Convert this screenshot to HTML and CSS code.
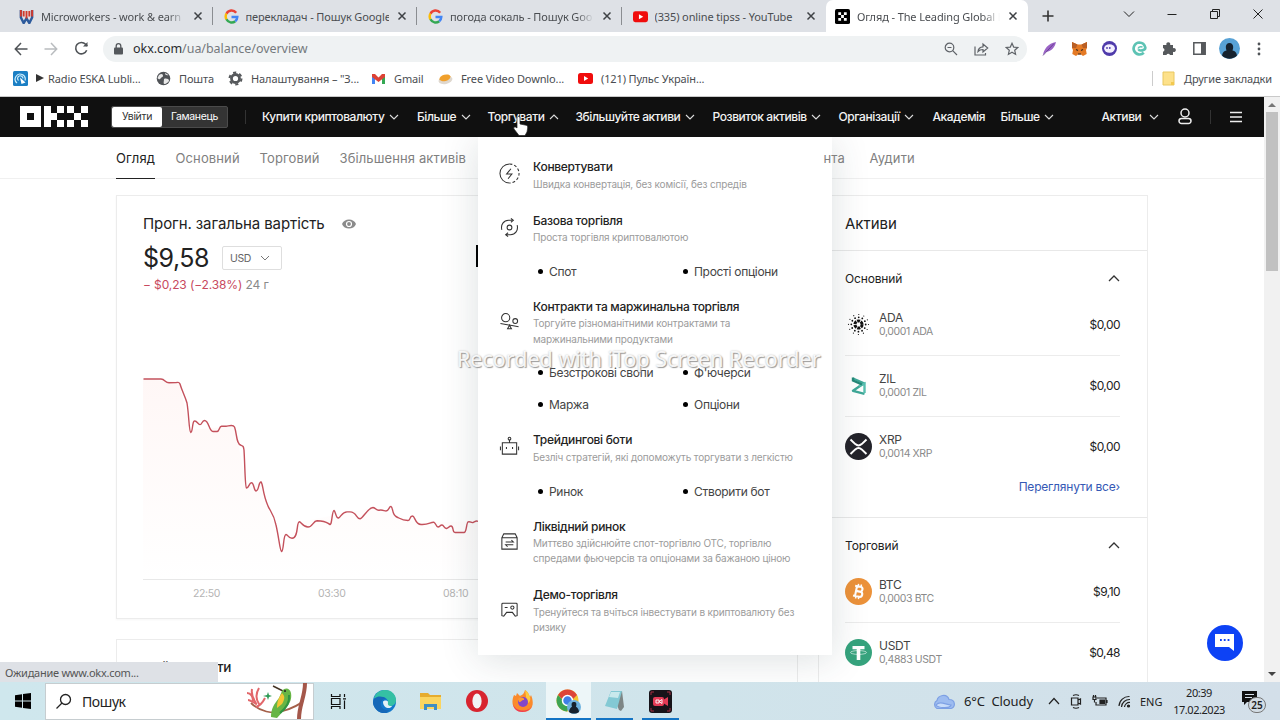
FILE: index.html
```
<!DOCTYPE html>
<html lang="uk">
<head>
  <meta charset="UTF-8">
  <title>Огляд - The Leading Global</title>
  <link rel="stylesheet" href="styles.css">
</head>
<body>

  <div class="tab-strip">
    <div class="tab">
      <svg class="favicon" viewBox="0 0 16 16"><path d="M2 1v8l3 6 3-5 3 5 3-6V1" fill="none" stroke="#2c5a9c" stroke-width="2.6"/><path d="M2 1v7M8 2v8M14 1v7M5 2v6M11 2v6" stroke="#d33a2c" stroke-width="2" fill="none"/></svg>
      <span class="tab-title">Microworkers - work &amp; earn</span>
      <svg class="tab-close" viewBox="0 0 10 10"><path d="M1.500 1.500l7 7M8.500 1.500l-7 7"/></svg>
    </div>
    <div class="tab">
      <svg class="favicon" viewBox="0 0 16 16" fill="none" stroke-width="2.6"><path d="M13 4A6.200 6.200 0 0 0 2.600 5" stroke="#ea4335"/><path d="M2.600 5a6.200 6.200 0 0 0 0 6" stroke="#fbbc05"/><path d="M2.600 11a6.200 6.200 0 0 0 9.400 2" stroke="#34a853"/><path d="M12 13a6 6 0 0 0 2.200-4.500H8" stroke="#4285f4"/></svg>
      <span class="tab-title no-fade">перекладач - Пошук Google</span>
      <svg class="tab-close" viewBox="0 0 10 10"><path d="M1.500 1.500l7 7M8.500 1.500l-7 7"/></svg>
    </div>
    <div class="tab">
      <svg class="favicon" viewBox="0 0 16 16" fill="none" stroke-width="2.6"><path d="M13 4A6.200 6.200 0 0 0 2.600 5" stroke="#ea4335"/><path d="M2.600 5a6.200 6.200 0 0 0 0 6" stroke="#fbbc05"/><path d="M2.600 11a6.200 6.200 0 0 0 9.400 2" stroke="#34a853"/><path d="M12 13a6 6 0 0 0 2.200-4.500H8" stroke="#4285f4"/></svg>
      <span class="tab-title">погода сокаль - Пошук Goo</span>
      <svg class="tab-close" viewBox="0 0 10 10"><path d="M1.500 1.500l7 7M8.500 1.500l-7 7"/></svg>
    </div>
    <div class="tab tab-last">
      <svg class="favicon" viewBox="0 0 16 16"><rect y="2.500" width="16" height="11.500" rx="2.500" fill="#f00c0c"/><path d="M6.300 5.500v5.500l4.600-2.700z" fill="#fff"/></svg>
      <span class="tab-title no-fade">(335) online tipss - YouTube</span>
      <svg class="tab-close" viewBox="0 0 10 10"><path d="M1.500 1.500l7 7M8.500 1.500l-7 7"/></svg>
    </div>
    <div class="tab tab-active">
      <svg class="favicon" viewBox="0 0 16 16"><rect width="16" height="16" rx="2" fill="#000"/><path d="M3.500 3.500h3v3h-3zM9.500 3.500h3v3h-3zM6.500 6.500h3v3h-3zM3.500 9.500h3v3h-3zM9.500 9.500h3v3h-3z" fill="#fff"/></svg>
      <span class="tab-title">Огляд - The Leading Global E</span>
      <svg class="tab-close" viewBox="0 0 10 10"><path d="M1.500 1.500l7 7M8.500 1.500l-7 7"/></svg>
    </div>
    <svg class="new-tab" viewBox="0 0 12 12"><path d="M6 .5v11M.5 6h11"/></svg>
    <div class="window-buttons">
      <svg viewBox="0 0 12 12"><path d="M1 3.500l5 5 5-5"/></svg>
      <svg viewBox="0 0 12 12"><path d="M1.500 6.500h9"/></svg>
      <svg viewBox="0 0 12 12"><path d="M1.500 3.500h7v7h-7zM3.500 3.500v-2h7v7h-2"/></svg>
      <svg viewBox="0 0 12 12"><path d="M1.500 1.500l9 9M10.500 1.500l-9 9"/></svg>
    </div>
  </div>

  <div class="toolbar">
    <div class="toolbar-cell"><svg width="14" height="14" viewBox="0 0 14 14" fill="none" stroke="#4f5357" stroke-width="1.500"><path d="M13.500 7H1.500M7 1L1.300 7 7 13"/></svg></div>
    <div class="toolbar-cell"><svg width="14" height="14" viewBox="0 0 14 14" fill="none" stroke="#b9bcbf" stroke-width="1.500"><path d="M.5 7h12M7 1l5.700 6L7 13"/></svg></div>
    <div class="toolbar-cell"><svg width="15" height="15" viewBox="0 0 15 15" fill="none" stroke="#4f5357" stroke-width="1.600"><path d="M12.700 9.300a5.700 5.700 0 1 1-1.100-6l1.700 1.700"/><path d="M13.500 1v4.600H9z" fill="#4f5357" stroke="none"/></svg></div>
    <div class="omnibox">
      <svg width="9" height="12" viewBox="0 0 9 12"><rect y="4.500" width="9" height="7" rx="1" fill="#54585c"/><path d="M2.200 5V3a2.300 2.300 0 0 1 4.600 0v2" fill="none" stroke="#54585c" stroke-width="1.300"/></svg>
      <span class="url">okx.com<span class="url-path">/ua/balance/overview</span></span>
      <div class="omnibox-icons">
        <svg width="14" height="14" viewBox="0 0 14 14"><circle cx="5.500" cy="5.500" r="4.300"/><path d="M8.700 8.700l4.300 4.300M3.500 5.500h4"/></svg>
        <svg width="15" height="14" viewBox="0 0 15 14"><path d="M1 4.500v8.500h10.500v-2M4 9.500c.3-3 2-4.500 5-4.700V2l4.700 4-4.700 4V7.500C7 7.500 5.300 8 4 9.500z"/></svg>
        <svg width="14" height="14" viewBox="0 0 14 14"><path d="M7 1.300l1.700 3.800 4.100.4-3.100 2.800.9 4.100L7 10.300l-3.600 2.100.9-4.100-3.100-2.800 4.100-.4z"/></svg>
      </div>
    </div>
    <div class="toolbar-cell"><svg width="15" height="15" viewBox="0 0 15 15"><path d="M1 14C2 8 6 2.500 14 1c-1 5-4 9-10 10z" fill="#9a63c6"/><path d="M1 14.500L12 2.500" stroke="#5c3a86" stroke-width=".8"/></svg></div>
    <div class="toolbar-cell"><svg width="15" height="14" viewBox="0 0 15 14"><path d="M0 0l5.500 2.500h4L15 0v6l-1 2 .7 4-3.700 2-2-1.500H6L4 14l-3.700-2L1 8 0 6z" fill="#e47a25"/><path d="M0 0l5.500 2.500L4 6 0 6zM15 0L9.500 2.500 11 6l4 0z" fill="#b95f25"/><path d="M4 7.500l2 1M11 7.500l-2 1M6 12h3" stroke="#3b2a20" stroke-width="1.200"/></svg></div>
    <div class="toolbar-cell"><svg width="15" height="15" viewBox="0 0 15 15"><circle cx="7.500" cy="7.500" r="7.500" fill="#4f3bab"/><ellipse cx="7.500" cy="7.500" rx="5.400" ry="4.200" fill="#f4f0ff"/><circle cx="5" cy="7" r=".9" fill="#4f3bab"/><circle cx="7.800" cy="7" r=".9" fill="#4f3bab"/></svg></div>
    <div class="toolbar-cell"><svg width="15" height="15" viewBox="0 0 15 15" fill="none" stroke="#5dc3b4"><path d="M6.500 8.200C7.500 10.500 13.500 9.500 13.300 6.500 12.500 3 10 1.500 7.300 1.500a6 6 0 1 0 4.500 10.300" stroke-width="2.700"/><path d="M6 7.500c1-2 3-2 4.500-1.500" stroke-width="1.500"/></svg></div>
    <div class="toolbar-cell"><svg width="14" height="14" viewBox="0 0 14 14"><path d="M1 3h3.500a2 2 0 1 1 3.600 0H11v3.200a2 2 0 1 1 0 3.600V13H8a2 2 0 0 0-3.600 0H1V9.700a1.900 1.900 0 0 0 0-3.700z" fill="#56595c"/></svg></div>
    <div class="toolbar-cell"><svg width="13" height="13" viewBox="0 0 13 13"><path d="M.8.800h11.400v11.400H.8z" fill="none" stroke="#56595c" stroke-width="1.500"/><path d="M8 1h4v11H8z" fill="#56595c"/></svg></div>
    <div class="toolbar-cell"><svg width="21" height="21" viewBox="0 0 21 21"><circle cx="10.500" cy="10.500" r="10.500" fill="#58a2d6"/><path d="M3 17.500c.5-3 2-4.500 4.500-5-1.500-4-.5-7.500 3-7.500s4.500 3.500 3 7.500c2.500.5 4 2 4.500 5a10.500 10.500 0 0 1-15 0z" fill="#15222f"/></svg></div>
    <div class="toolbar-cell"><svg width="4" height="14" viewBox="0 0 4 14" fill="#4f5357"><circle cx="2" cy="2" r="1.400"/><circle cx="2" cy="7" r="1.400"/><circle cx="2" cy="12" r="1.400"/></svg></div>
  </div>

  <div class="bookmarks">
    <div class="bookmark"><svg class="bm-icon" viewBox="0 0 15 15"><rect width="15" height="15" rx="1.500" fill="#1b7fc4"/><path d="M4 12A5 5 0 1 1 12 9.500M5.500 9.500a2.700 2.700 0 1 1 4.500-2" fill="none" stroke="#cdeefc" stroke-width="1.200"/><path d="M7 6.500l1.500 6.500 4-1.500z" fill="#fff"/></svg><span class="play"></span><span>Radio ESKA Lubli...</span></div>
    <div class="bookmark"><svg class="bm-icon" viewBox="0 0 15 15"><circle cx="7.500" cy="7.500" r="6.800" fill="#505357"/><path d="M3 4c3-2 4-.5 4 1s-2 1-2.500 2.500S2 8 1.500 7M9 2c0 2 1.500 2.500 3.500 2M8 8c2-1 5 0 5 1.500S10 13 8.500 13 8 10 8 8z" fill="#e8e8e8"/></svg><span>Пошта</span></div>
    <div class="bookmark"><svg class="bm-icon" viewBox="0 0 15 15"><circle cx="7.500" cy="7.500" r="4" fill="none" stroke="#56595c" stroke-width="2.800"/><circle cx="7.500" cy="7.500" r="6" fill="none" stroke="#56595c" stroke-width="2" stroke-dasharray="3.142 3.142"/></svg><span>Налаштування – "З...</span></div>
    <div class="bookmark"><svg class="bm-icon" viewBox="0 0 15 15"><path d="M1 3h3v10H1z" fill="#4285f4"/><path d="M11 3h3v10h-3z" fill="#34a853"/><path d="M1 3l3 0 3.500 3.500L11 3h3v3L7.500 11 1 6z" fill="#dd4235"/></svg><span>Gmail</span></div>
    <div class="bookmark"><svg class="bm-icon" viewBox="0 0 15 15"><ellipse cx="7.500" cy="9" rx="7" ry="4" fill="#dfd8cf" transform="rotate(-12 7.500 9)"/><ellipse cx="7" cy="6.800" rx="5.600" ry="3.200" fill="#f0a02c" transform="rotate(-15 7 7)"/></svg><span>Free Video Downlo...</span></div>
    <div class="bookmark"><svg class="bm-icon" viewBox="0 0 15 15"><rect y="2" width="15" height="11" rx="2.500" fill="#f00c0c"/><path d="M6 5v5l4.200-2.500z" fill="#fff"/></svg><span>(121) Пульс Україн...</span></div>
    <div class="bookmark other-bookmarks"><svg class="bm-icon" viewBox="0 0 15 15"><path d="M2 1h11v13H2z" fill="#fde18a" stroke="#e9c860"/><path d="M10 11h3v3h-3z" fill="#f3c94f"/></svg><span>Другие закладки</span></div>
  </div>

  <div class="viewport">
    <div class="page">
      <header class="okx-header">
        <svg class="okx-logo" width="68" height="21" viewBox="0 0 68 21" fill="#fff" shape-rendering="crispEdges"><path d="M0 0h21v21H0zM7 7v7h7V7z" fill-rule="evenodd"/><path d="M24 0h7v21h-7zM31 7h6v7h-6zM37 0h7v7h-7zM37 14h7v7h-7z"/><path d="M47 0h7v7h-7zM61 0h7v7h-7zM54 7h7v7h-7zM47 14h7v7h-7zM61 14h7v7h-7z"/></svg>
        <div class="switcher"><span class="switch-on">Увійти</span><span class="switch-off">Гаманець</span></div>
        <nav class="main-nav">
          <a>Купити криптовалюту <svg viewBox="0 0 10 6"><path d="M1 1l4 4 4-4"/></svg></a>
          <a>Більше <svg viewBox="0 0 10 6"><path d="M1 1l4 4 4-4"/></svg></a>
          <a>Торгувати <svg viewBox="0 0 10 6"><path d="M1 5l4-4 4 4"/></svg></a>
          <a>Збільшуйте активи <svg viewBox="0 0 10 6"><path d="M1 1l4 4 4-4"/></svg></a>
          <a>Розвиток активів <svg viewBox="0 0 10 6"><path d="M1 1l4 4 4-4"/></svg></a>
          <a>Організації <svg viewBox="0 0 10 6"><path d="M1 1l4 4 4-4"/></svg></a>
          <a>Академія</a>
          <a>Більше <svg viewBox="0 0 10 6"><path d="M1 1l4 4 4-4"/></svg></a>
          <a class="nav-assets">Активи <svg viewBox="0 0 10 6"><path d="M1 1l4 4 4-4"/></svg></a>
        </nav>
        <svg class="user-icon" width="14" height="17" viewBox="0 0 14 17"><circle cx="7" cy="5" r="4"/><path d="M3.500 10.500h7a2.500 2.500 0 0 1 0 5h-7a2.500 2.500 0 0 1 0-5z"/></svg>
        <span class="header-line"></span>
        <svg class="burger" width="12" height="12" viewBox="0 0 12 12"><path d="M0 1.500h12M0 6h12M0 10.500h12"/></svg>
      </header>

      <nav class="sub-nav">
        <a class="current">Огляд</a>
        <a>Основний</a>
        <a>Торговий</a>
        <a>Збільшення активів</a>
        <a>нта</a>
        <a>Аудити</a>
      </nav>

      <main class="content">
        <div class="left-column">
          <section class="card balance">
            <h2 class="balance-title">Прогн. загальна вартість <svg width="14" height="10" viewBox="0 0 14 10"><path d="M0 5C2-1 12-1 14 5 12 11 2 11 0 5z" fill="#8b8b8b"/><circle cx="7" cy="5" r="2.500" fill="none" stroke="#fff" stroke-width="1.200"/></svg></h2>
            <div class="balance-row">
              <span class="amount">$9,58</span>
              <span class="currency">USD <svg viewBox="0 0 10 6"><path d="M1 1l4 4 4-4"/></svg></span>
              <span class="range-button"></span>
            </div>
            <p class="change"><span class="loss">− $0,23 (−2.38%)</span> 24 г</p>
            <svg class="chart" width="627" height="210" viewBox="143 370 627 210">
              <defs>
                <linearGradient id="fade" x1="0" y1="0" x2="0" y2="1"><stop offset="0" stop-color="#fff7f6"/><stop offset="1" stop-color="#fff"/></linearGradient>
              </defs>
              <path fill="url(#fade)" d="M143 379L179 382 190 430 235 426 246 485 261 483 281 551 299 522 372 508 420 523 478 521V580H143z"/>
              <path class="chart-line" d="M143.500 379H161C165 379 165 382.800 169 382.800L176 382.600C179 382 179 382.500 180 384C182 391 185 396 187 403C189 415 189 432 190.800 432.500C193 432 192 420 195 421C197 421 198 424.600 200 424.600S202 420.500 204.500 420.500C209 420.500 209 431.500 213 431.500H217C219.500 431.500 219 426.500 221.500 426.300H226C229 426 233 424 234.500 427C237 433 236 444 241 445.300C243 446 243.500 446 244 450C245 466 245 487 246.500 488C249 488 249 482.700 251.500 482.700S254 491 256 491C259 491 258.500 481.500 261 482C263 483 262.500 494 268 506C270 511 274 514 276 525C279 538 280 551 281.500 551.500C284 551 283 535 286 534.500C288 534.500 288 538.300 292 538.300C299 538.300 296 521.500 299.500 521.800C301 522 303 527 308 527S313 520.700 317 520.700C327 521 327 523 330 524.500C332 525 332 510.500 334 510.500C335.500 511 336 518.500 338.500 518C341 517 342 512 347 511.900H350C357 512 356 518.800 360 518.800C363 518.500 368 507.500 373 507.500C376 508 376 510.500 379 510.200C383 509.500 384 511 386 511C389 511 389 506 391 506.500C393 507 392 514.500 396 516.500C401 519 402 520.500 408 520.500C411 520.300 409 516 412.500 516C415 516 415 524.500 421 524.500C429 525 430 522 434 522.300C436 523 436 527 438 527S440 524.800 442 525S444 528.800 446.500 528.500S449 526 451 526C454 526 452 532.500 455 532.500H464C467 532.500 466 521.800 468.500 521.800C471 521.500 471 523 473 522.500C475 522 476 520 478 521.500"/>
              <path d="M143 579.500h627" stroke="#e8e8e8"/>
            </svg>
            <div class="chart-times"><span>22:50</span><span>03:30</span><span>08:10</span></div>
          </section>
          <section class="card products"><h2>Мої продукти</h2></section>
        </div>

        <aside class="card assets">
          <h2 class="assets-title">Активи</h2>
          <div class="assets-group">
            <h3>Основний <svg viewBox="0 0 12 7"><path d="M1 6l5-5 5 5"/></svg></h3>
            <div class="coin">
              <svg class="coin-icon" viewBox="0 0 27 27" fill="none" stroke="#111"><circle cx="13.500" cy="13.500" r="3.600" stroke-width="3" stroke-dasharray="3 .77"/><g stroke-linecap="round"><circle cx="13.500" cy="13.500" r="7.200" stroke-width="1.800" stroke-dasharray="0 3.770"/><circle cx="13.500" cy="13.500" r="10" stroke-width="1.200" stroke-dasharray="0 5.236"/></g></svg>
              <div class="coin-name">ADA<small>0,0001 ADA</small></div><span>$0,00</span>
            </div>
            <div class="coin">
              <svg class="coin-icon" viewBox="0 0 27 27" fill="none" stroke-width="2.400"><path d="M8 6.500l11 4.800-11 7.500 11.500 3" stroke="#3fa898" stroke-linejoin="round"/><path d="M14 14l5.500-2.500v9.500" stroke="#58bfb0"/><path d="M8 5.500v3l9 4" stroke="#258878"/></svg>
              <div class="coin-name">ZIL<small>0,0001 ZIL</small></div><span>$0,00</span>
            </div>
            <div class="coin">
              <svg class="coin-icon" viewBox="0 0 27 27"><circle cx="13.500" cy="13.500" r="13.500" fill="#23232a"/><path d="M5.500 6.500l4.800 4.600c2 1.800 4.400 1.800 6.400 0l4.800-4.600M5.500 21l4.800-4.600c2-1.800 4.400-1.800 6.400 0l4.800 4.600" fill="none" stroke="#fff" stroke-width="2"/></svg>
              <div class="coin-name">XRP<small>0,0014 XRP</small></div><span>$0,00</span>
            </div>
            <p class="view-all">Переглянути все<span>›</span></p>
          </div>
          <div class="assets-group">
            <h3>Торговий <svg viewBox="0 0 12 7"><path d="M1 6l5-5 5 5"/></svg></h3>
            <div class="coin">
              <svg class="coin-icon" viewBox="0 0 27 27"><circle cx="13.500" cy="13.500" r="13.500" fill="#ec923a"/><g transform="rotate(12 13.500 13.500)" fill="none" stroke="#fff"><path d="M9 8.500h5.500a2.400 2.400 0 0 1 0 4.900H11h4.200a2.600 2.600 0 0 1 0 5.200H9M11 8.500v10" stroke-width="2.100"/><path d="M12 6v2.500M15 6v2.500M12 18.500V21M15 18.500V21" stroke-width="1.500"/></g></svg>
              <div class="coin-name">BTC<small>0,0003 BTC</small></div><span>$9,10</span>
            </div>
            <div class="coin">
              <svg class="coin-icon" viewBox="0 0 27 27"><circle cx="13.500" cy="13.500" r="13.500" fill="#36a37d"/><path d="M7.500 7h12v3.300H15.300V21h-3.600V10.300H7.500z" fill="#fff"/><ellipse cx="13.500" cy="13.500" rx="8" ry="1.900" fill="none" stroke="#fff" stroke-width=".6"/></svg>
              <div class="coin-name">USDT<small>0,4883 USDT</small></div><span>$0,48</span>
            </div>
          </div>
        </aside>
      </main>

      <div class="trade-menu">
        <div class="menu-item">
          <svg viewBox="0 0 22 22"><path d="M11 1a10 10 0 0 0 0 20"/><path d="M11 1a10 10 0 0 1 0 20" stroke-dasharray="3 2"/><path d="M12.500 6L8 11.500h5.500L9.500 16.500"/></svg>
          <h4>Конвертувати</h4>
          <p>Швидка конвертація, без комісії, без спредів</p>
        </div>
        <div class="menu-item">
          <svg viewBox="0 0 22 22"><circle cx="11" cy="11" r="2.500"/><path d="M3 13.500C1.500 8 5 3.500 10 3.500h4M12.500 1.500l2.500 2-2.500 2M19 8.500c1.500 5.500-2 10-7 10H8M9.500 16.500l-2.500 2 2.500 2"/></svg>
          <h4>Базова торгівля</h4>
          <p>Проста торгівля криптовалютою</p>
          <ul><li>Спот</li><li>Прості опціони</li></ul>
        </div>
        <div class="menu-item icon-low">
          <svg viewBox="0 0 22 22"><circle cx="7" cy="7" r="4.300"/><circle cx="17" cy="10.500" r="2.500"/><path d="M1.500 13l19 3.500M11 15l-2 3.500h4z"/></svg>
          <h4>Контракти та маржинальна торгівля</h4>
          <p>Торгуйте різноманітними контрактами та маржинальними продуктами</p>
          <ul><li>Безстрокові свопи</li><li>Ф'ючерси</li><li>Маржа</li><li>Опціони</li></ul>
        </div>
        <div class="menu-item">
          <svg viewBox="0 0 22 22"><path d="M3.500 7h15v12h-15zM11 7V4M1.500 11v4M20.500 11v4"/><circle cx="11" cy="2.800" r="1.400"/><path d="M7.800 11.500v2M14.200 11.500v2"/></svg>
          <h4>Трейдингові боти</h4>
          <p>Безліч стратегій, які допоможуть торгувати з легкістю</p>
          <ul><li>Ринок</li><li>Створити бот</li></ul>
        </div>
        <div class="menu-item icon-low">
          <svg viewBox="0 0 22 22"><path d="M3 7l2-4h12l2 4v12H3zM3 7h16M7 11.500h8l-2-2M15 14.500H7l2 2"/></svg>
          <h4>Ліквідний ринок</h4>
          <p>Миттєво здійснюйте спот-торгівлю ОТС, торгівлю спредами фьючерсів та опціонами за бажаною ціною</p>
        </div>
        <div class="menu-item icon-low">
          <svg viewBox="0 0 22 22"><path d="M4 4.500h14q1 0 1 1v12l-2 .5-3-4H8l-3 4-2-.5v-12q0-1 1-1zM6 9h3"/><circle cx="14" cy="9" r="1.700"/></svg>
          <h4>Демо-торгівля</h4>
          <p>Тренуйтеся та вчіться інвестувати в криптовалюту без ризику</p>
        </div>
      </div>

      <div class="chat-button"><svg width="20" height="18" viewBox="0 0 20 18"><path d="M0 0h19v17l-5-4H0z" fill="#fff"/><path d="M5 5h1.800v2H5zM8.800 5h1.800v2H8.800zM12.600 5h1.800v2h-1.800z" fill="#0d42f5"/></svg></div>
      <div class="status-bubble">Ожидание www.okx.com...</div>
    </div>
    <div class="scrollbar"><span class="arrow-up"></span><span class="thumb"></span><span class="arrow-down"></span></div>
  </div>

  <div class="taskbar">
    <div class="start"><svg width="16" height="16" viewBox="0 0 16 16"><path d="M0 2.300L7 1.300v6.200H0zM8 1.100L16 0v7.500H8zM0 8.500h7v6.200l-7-1zM8 8.500h8V16l-8-1.100z"/></svg></div>
    <div class="search">
      <svg width="17" height="17" viewBox="0 0 17 17" fill="none" stroke="#222" stroke-width="1.300"><circle cx="10.500" cy="6.500" r="5"/><path d="M7 10L1.500 15.500"/></svg>
      <span>Пошук</span>
      <svg class="bird" width="66" height="36" viewBox="0 0 66 36"><path d="M6 20c8 8 22 12 32 8 10-3 16-6 20-10" fill="none" stroke="#a5604a" stroke-width="1.800"/><path d="M60 0c0 14-6 22-6 36" fill="none" stroke="#a4574a" stroke-width="4"/><path d="M2 10c4 0 6 4 6 8M7 6c-1 6 1 10 4 14M14 5c-3 5-4 10 0 16M3 17c3 0 5 3 9 4M11 24c3-1 7-5 9-9" fill="none" stroke="#e2676b" stroke-width="2"/><path d="M23 9l1 3 3 1-3 1-1 3-1-3-4-1 4-1z" fill="#2f9a55"/><path d="M28 3l12 6" stroke="#443425" stroke-width="1.400"/><path d="M37 8c3-4 8-3 9 2 1 6-1 10-5 15l-9 10-6-1c0-8 3-13 8-19z" fill="#67b545"/><path d="M37 10c3 3 3 6 0 11l-5 4c0-6 1-9 5-15z" fill="#f4c534"/><path d="M44 12c1 8-4 14-9 18" fill="none" stroke="#2f9441" stroke-width="2"/><circle cx="40" cy="8" r="1" fill="#222"/></svg>
    </div>
    <div class="task-view"><svg width="17" height="15" viewBox="0 0 17 15" fill="none" stroke="#111" stroke-width="1.200"><path d="M1.500 0v2.500h8.500V0M1.500 15v-2.500h8.500V15M1.500 4.500h8.500v6H1.500zM14.500 0v3M14.500 6.500V15M13 4.800h3"/></svg></div>
    <div class="app"><svg width="23" height="23" viewBox="0 0 23 23"><circle cx="11.500" cy="11.500" r="11.500" fill="#1479cc"/><path d="M1 8C3 2 8 0 12 0c7 0 11 5 11 10 0 4-3 6-6 6-4 0-3-2-2-4 0-3-3-5-6-5S3 9 1 8z" fill="#35c0a4"/><path d="M0 12c1-6 9-7 13-3-4 0-6 3-5 7 1 3 5 5 9 4l-4 3C6 24 0 18 0 12z" fill="#1668b8"/><path d="M10 12c0-2 5-2 5 0s-1 4 4 4c-2 4-9 2-9-4z" fill="#e3f2f7"/></svg></div>
    <div class="app"><svg width="21" height="19" viewBox="0 0 21 19"><path d="M0 1h8l2 2h11v14H0z" fill="#e6ac2e"/><path d="M0 5h21v12H0z" fill="#fbd55f"/><path d="M4 18v-6h13v6h-3v-3H7v3z" fill="#3f8dc2"/></svg></div>
    <div class="app"><svg width="22" height="22" viewBox="0 0 22 22"><circle cx="11" cy="11" r="11" fill="#d8242f"/><ellipse cx="11" cy="11" rx="4.600" ry="7.500" fill="#f1f4f5"/></svg></div>
    <div class="app"><svg width="22" height="22" viewBox="0 0 22 22"><path d="M2 5l2 1 1-3 3 3c2-1 4-2 5-6 4 3 4 5 5 7l1-2c4 9 1 17-8 17C2 22-2 14 2 5z" fill="#fb8a2b"/><path d="M13 0c4 3 4 5 5 7 1 4-1 6-3 6z" fill="#fec93d"/><path d="M1 13c0 12 18 12 20 0-1 10-19 10-20 0z" fill="#ee3c58"/><circle cx="11" cy="12" r="5" fill="#8247ca"/><path d="M6 9c3-3 7-1 6 1-3 0-2 2-5 2z" fill="#fb9b35"/></svg></div>
    <div class="app app-open"><svg width="25" height="25" viewBox="0 0 25 25"><circle cx="11.500" cy="11.500" r="11" fill="#f3c632"/><path d="M2 6a11 11 0 0 1 19 0l-5 5H7z" fill="#dd4538"/><path d="M2 6a11 11 0 0 0 9 16.500l3-7-6-3z" fill="#3da454"/><circle cx="11.500" cy="11.500" r="5" fill="#3f7fe8" stroke="#fff" stroke-width="1.500"/><circle cx="18" cy="18" r="7" fill="#6eb2de"/><path d="M13 23c0-3 2-5 3-5-1-4 0-5 2-5s3 1 2 5c1 0 3 2 3 5-3 2-7 2-10 0z" fill="#17222d"/></svg></div>
    <div class="app app-running"><svg width="21" height="22" viewBox="0 0 21 22"><path d="M7 1h11l2 16-3 4-2-1z" fill="#7d8686"/><path d="M7 1h11l-5 18L1 16z" fill="#83c9d4"/><path d="M7 2h9l-2 6-9-1z" fill="#c8e9ec"/></svg></div>
    <div class="app app-running"><svg width="23" height="23" viewBox="0 0 23 23"><rect width="23" height="23" rx="3" fill="#171319"/><rect x="4" y="7" width="11" height="9" rx="2" fill="#e33b56"/><path d="M14 10l5-3v9l-5-3z" fill="#e33b56"/><path d="M7 10h3v3H7zM10 11.500l3-2v4z" fill="none" stroke="#fff" stroke-width=".9"/><path d="M2 5V2h3M18 2h3v3M21 18v3h-3M5 21H2v-3" fill="none" stroke="#a62f42"/></svg></div>
    <div class="tray">
      <svg class="cloud" width="23" height="15" viewBox="0 0 23 15"><path d="M5 14.500a4.500 4.500 0 0 1 0-8C6 1 15-1 17 5.500c7 0 7 9 1 9z" fill="#9dbcf0"/><path d="M4 11c4-5 10 0 15 0-1 4-13 3-15 0z" fill="#c8dcfa"/></svg>
      <span class="weather">6°C&nbsp; Cloudy</span>
      <svg width="12" height="8" viewBox="0 0 12 8"><path d="M1 7l5-5.500L11 7"/></svg>
      <svg width="12" height="15" viewBox="0 0 12 15"><path d="M1.500 4h6.500v7H1.500zM8 6l2.500-1v5L8 9M3 1.500q3-1.500 6 0M3 13.500q3 1.500 6 0"/></svg>
      <svg width="16" height="12" viewBox="0 0 16 12"><path d="M5 3h9v7H4V7M15 5v3"/><path d="M8 5h4.500v3.500H8z" fill="#222"/><path d="M1 2h3v2.500H1zM2.500 4.500v3M1.500 0v2M3.500 0v2"/></svg>
      <svg width="13" height="13" viewBox="0 0 13 13"><path d="M1 11A10 10 0 0 1 11.500 1.500M3.500 12A8 8 0 0 1 12 4.500M6.500 12A5 5 0 0 1 12 7.500"/><circle cx="10.500" cy="11" r="1" fill="#222"/></svg>
      <span class="lang">ENG</span>
      <div class="clock"><span>20:39</span><span>17.02.2023</span></div>
      <div class="notify"><svg width="16" height="15" viewBox="0 0 16 15"><path d="M0 0h15v11H5l-3 3v-3H0z" fill="#111"/><path d="M3 3.500h9M3 6.500h7" stroke="#d5e1ea"/></svg><span class="badge">25</span></div>
    </div>
  </div>

  <div class="watermark">Recorded with iTop Screen Recorder</div>
  <svg class="cursor" width="16" height="20" viewBox="0 0 16 20"><path d="M4 12V2c0-2 3-2 3 0v6l5 1c2 .3 3 1 2.700 3L14 16l-2 3.500H6L1 13c-1-2 1-3 3-1z" fill="#fff" stroke="#222" stroke-width=".7"/></svg>

</body>
</html>
```
FILE: styles.css
```
* {
  box-sizing: border-box;
}
body {
  margin: 0;
  width: 1280px;
  height: 720px;
  overflow: hidden;
  display: flex;
  flex-direction: column;
  position: relative;
  background: #fff;
  font-family: "Noto Sans", sans-serif;
  font-size: 11px;
  color: #4a4d51;
}
h2, h3, h4, p, ul {
  margin: 0;
  padding: 0;
  font-weight: 400;
}
svg {
  flex: none;
}

/* browser tabs */
.tab-strip {
  height: 32px;
  flex: none;
  display: flex;
  align-items: center;
  background: #dee1e6;
  padding-left: 8px;
}
.tab {
  width: 204.500px;
  height: 32px;
  display: flex;
  align-items: center;
  padding: 0 10px 0 11px;
  position: relative;
}
.tab::after {
  content: "";
  position: absolute;
  right: 0;
  top: 7px;
  width: 1px;
  height: 18px;
  background: #8a8d91;
}
.tab-last::after,
.tab-active::after {
  display: none;
}
.tab-active {
  background: #fff;
  border-radius: 7px 7px 0 0;
  width: 202px;
  padding-left: 9px;
}
.favicon {
  width: 15px;
  height: 15px;
  margin-right: 7px;
}
.tab-title {
  flex: 1;
  white-space: nowrap;
  overflow: hidden;
  margin-right: 8px;
  letter-spacing: -0.120px;
  -webkit-mask-image: linear-gradient(to right, #000 88%, transparent 100%);
}
.no-fade {
  -webkit-mask-image: none;
}
.tab-close {
  width: 10px;
  height: 10px;
  stroke: #3e4145;
  stroke-width: 1.500;
}
.new-tab {
  width: 12px;
  height: 12px;
  margin-left: 14px;
  stroke: #333;
  stroke-width: 1.600;
}
.window-buttons {
  margin-left: auto;
  display: flex;
  padding: 0 1px 5px 0;
}
.window-buttons svg {
  width: 12px;
  height: 12px;
  margin: 0 15.500px;
  fill: none;
  stroke: #222;
}

/* address bar */
.toolbar {
  height: 33px;
  flex: none;
  display: flex;
  align-items: center;
  padding: 0 6px 0 6px;
}
.toolbar-cell {
  width: 30px;
  display: flex;
  justify-content: center;
}
.omnibox {
  flex: 1;
  height: 26px;
  margin: 0 7px;
  border-radius: 13px;
  background: #eff2f3;
  display: flex;
  align-items: center;
  padding: 0 8px 0 11px;
}
.url {
  margin-left: 10px;
  font-size: 12.500px;
  letter-spacing: -0.050px;
  color: #2a2c2f;
}
.url-path {
  color: #75797d;
}
.omnibox-icons {
  margin-left: auto;
  display: flex;
  gap: 16px;
  fill: none;
  stroke: #5f6368;
  stroke-width: 1.200;
}

/* bookmarks */
.bookmarks {
  height: 32px;
  flex: none;
  display: grid;
  grid-template-columns: 143px 73px 143px 66px 140px 574px auto;
  align-items: center;
  padding: 0 0 5px 13px;
  border-bottom: 1px solid #c9c9c9;
  letter-spacing: -0.120px;
}
.bookmark {
  display: flex;
  align-items: center;
  white-space: nowrap;
}
.bm-icon {
  width: 15px;
  height: 15px;
  margin-right: 8px;
}
.bookmark:nth-child(3) .bm-icon,
.bookmark:nth-child(4) .bm-icon {
  margin-left: -1px;
}
.play {
  border-left: 8px solid #333;
  border-top: 4px solid transparent;
  border-bottom: 4px solid transparent;
  margin-right: 4px;
}
.other-bookmarks {
  border-left: 1px solid #ccc;
  padding-left: 8px;
}

/* page */
.viewport {
  height: 585px;
  flex: none;
  display: flex;
}
.page {
  width: 1264px;
  position: relative;
  overflow: hidden;
  font-family: Inter, sans-serif;
  color: #222;
}
.okx-header {
  height: 40px;
  background: #101010;
  display: flex;
  align-items: center;
  padding: 0 0 1px 20px;
  position: relative;
  z-index: 3;
}
.switcher {
  width: 117px;
  height: 22px;
  margin-left: 23px;
  display: flex;
  border: 1px solid #4b4b4b;
  border-radius: 2px;
  background: #343434;
  font-size: 10.500px;
  line-height: 20px;
  text-align: center;
  letter-spacing: -0.350px;
}
.switch-on {
  width: 50px;
  background: #fff;
  color: #333;
  border-radius: 2px;
}
.switch-off {
  flex: 1;
  color: #fff;
}
.main-nav {
  margin-left: 17px;
  padding-left: 17px;
  display: grid;
  grid-template-columns: 155px 70.500px 88px 137px 126px 94px 68px 101px 76px;
  background: linear-gradient(#333, #333) 0 50% / 1px 14px no-repeat;
  font-size: 12px;
  font-weight: 500;
  letter-spacing: -0.420px;
  color: #f3f3f3;
}
.main-nav a {
  display: flex;
  align-items: center;
  gap: 4.500px;
  white-space: nowrap;
}
.main-nav .nav-assets {
  gap: 8px;
}
.main-nav svg {
  width: 10px;
  height: 6px;
  fill: none;
  stroke: #ddd;
  stroke-width: 1.100;
}
.user-icon {
  fill: none;
  stroke: #eee;
  stroke-width: 1.500;
}
.header-line {
  width: 1px;
  height: 14px;
  margin: 0 19px 0 18px;
  background: #333;
}
.burger {
  stroke: #eee;
  stroke-width: 1.500;
}
.sub-nav {
  height: 42px;
  padding-left: 116px;
  display: grid;
  grid-template-columns: 59.500px 84px 80px 484px 46px auto;
  border-bottom: 1px solid #f0f0f0;
  font-size: 13px;
  letter-spacing: 0.120px;
  line-height: 42px;
  color: #808080;
}
.sub-nav a {
  justify-self: start;
  height: 42px;
  white-space: nowrap;
}
.sub-nav a:nth-child(5) {
  position: relative;
  z-index: 4;
}
.sub-nav .current {
  color: #222;
  border-bottom: 1px solid #222;
}
.content {
  display: flex;
  align-items: flex-start;
  gap: 20px;
  padding: 16px 0 0 116px;
}
.left-column {
  width: 682px;
}
.card {
  border: 1px solid #ececec;
  background: #fff;
}
.balance {
  height: 424px;
  padding: 18px 26px 0;
  box-shadow: 0 1px 2px rgba(0, 0, 0, 0.04);
}
.balance-title {
  display: flex;
  align-items: center;
  gap: 17px;
  font-size: 15px;
  letter-spacing: -0.100px;
  line-height: 20px;
}
.balance-row {
  display: flex;
  align-items: center;
  height: 36px;
  margin-top: 6px;
}
.amount {
  width: 79px;
  font-size: 25px;
  letter-spacing: -0.500px;
}
.currency {
  width: 60px;
  height: 24px;
  border: 1px solid #dedede;
  border-radius: 2px;
  display: flex;
  align-items: center;
  gap: 9px;
  padding-left: 7px;
  font-size: 10.500px;
  letter-spacing: -0.400px;
  color: #666;
}
.currency svg {
  width: 10px;
  height: 6px;
  fill: none;
  stroke: #777;
}
.range-button {
  width: 50px;
  height: 22px;
  margin: -4px 0 0 194px;
  background: #000;
}
.change {
  font-size: 12px;
  letter-spacing: -0.120px;
  line-height: 18px;
  color: #8a8a8a;
}
.loss {
  color: #c8495e;
}
.chart {
  display: block;
  margin-top: 76px;
}
.chart-line {
  fill: none;
  stroke: #c4515c;
  stroke-width: 1.400;
}
.chart-times {
  display: flex;
  gap: 98px;
  padding: 6px 0 0 50px;
  font-size: 10.500px;
  letter-spacing: -0.350px;
  line-height: 16px;
  color: #b4b4b4;
}
.chart-times span {
  width: 27px;
  white-space: nowrap;
}
.products {
  height: 100px;
  margin-top: 20px;
  padding: 17px 27px;
}
.products h2 {
  font-size: 13.500px;
  font-weight: 500;
  letter-spacing: -0.300px;
  line-height: 20px;
}

/* assets */
.assets {
  width: 330px;
}
.assets-title {
  height: 55px;
  padding-left: 26px;
  font-size: 15px;
  line-height: 56px;
  border-bottom: 1px solid #e8e8e8;
}
.assets-group {
  padding: 0 27px 0 26px;
  border-bottom: 1px solid #e8e8e8;
}
.assets-group h3 {
  height: 43.500px;
  display: flex;
  align-items: center;
  justify-content: space-between;
  padding-top: 12px;
  font-size: 12px;
  letter-spacing: -0.150px;
}
.assets-group h3 svg {
  width: 12px;
  height: 7px;
  fill: none;
  stroke: #333;
  stroke-width: 1.300;
}
.coin {
  height: 61px;
  display: flex;
  align-items: center;
  border-bottom: 1px solid #ececec;
  font-size: 12px;
  letter-spacing: -0.550px;
}
.coin:nth-child(4) {
  border-bottom: none;
  height: 60px;
}
.coin-icon {
  width: 27px;
  height: 27px;
  margin-right: 7px;
}
.coin-name {
  flex: 1;
  line-height: 15px;
  letter-spacing: -0.300px;
  color: #444;
}
.coin-name small {
  display: block;
  line-height: 14px;
  font-size: 10.500px;
  letter-spacing: -0.400px;
  color: #8a8a8a;
}
.view-all {
  height: 40.500px;
  line-height: 20px;
  text-align: right;
  font-size: 12px;
  letter-spacing: -0.200px;
  color: #3559b5;
}

/* trade menu */
.trade-menu {
  position: absolute;
  left: 478px;
  top: 40px;
  width: 354px;
  height: 518px;
  padding: 21px 0 0 55px;
  background: #fff;
  box-shadow: 0 4px 36px rgba(40, 60, 70, 0.16);
  z-index: 2;
}
.menu-item {
  position: relative;
  padding-bottom: 20px;
}
.menu-item > svg {
  position: absolute;
  left: -34px;
  top: 5px;
  width: 21px;
  height: 21px;
  fill: none;
  stroke: #333;
  stroke-width: 1.100;
}
.icon-low > svg {
  top: 13px;
}
.menu-item h4 {
  font-size: 12px;
  font-weight: 500;
  letter-spacing: -0.300px;
  line-height: 17px;
}
.menu-item p {
  width: 275px;
  margin-top: 1.500px;
  font-size: 10px;
  letter-spacing: -0.160px;
  line-height: 15.200px;
  color: #9b9b9b;
}
.menu-item ul {
  display: grid;
  grid-template-columns: 145px 145px;
  margin: 10.500px 0 -10px 16px;
  list-style: none;
  font-size: 12px;
  letter-spacing: -0.300px;
  line-height: 32px;
  color: #444;
}
.menu-item li {
  position: relative;
}
.menu-item li::before {
  content: "";
  position: absolute;
  left: -11px;
  top: 13px;
  width: 5px;
  height: 5px;
  border-radius: 50%;
  background: #000;
}
.chat-button {
  position: absolute;
  right: 21px;
  bottom: 21px;
  width: 36px;
  height: 36px;
  border-radius: 50%;
  background: #0d42f5;
  display: flex;
  align-items: center;
  justify-content: center;
}
.status-bubble {
  position: absolute;
  left: 0;
  bottom: 0;
  width: 218px;
  height: 20px;
  padding-left: 5px;
  background: #dee1e6;
  font-family: "Noto Sans", sans-serif;
  font-size: 11px;
  letter-spacing: -0.250px;
  line-height: 21px;
  color: #555;
}
.scrollbar {
  width: 16px;
  background: #f1f1f1;
  display: flex;
  flex-direction: column;
  align-items: center;
  padding: 6px 0;
}
.arrow-up {
  border: 4px solid transparent;
  border-top: none;
  border-bottom: 4px solid #777;
}
.thumb {
  width: 12px;
  height: 159px;
  margin-top: 5px;
  background: #c1c1c1;
}
.arrow-down {
  margin-top: auto;
  border: 4px solid transparent;
  border-bottom: none;
  border-top: 4px solid #444;
}

/* taskbar */
.taskbar {
  height: 38px;
  flex: none;
  display: flex;
  align-items: center;
  background: linear-gradient(to right, #cfe7ed, #d0e4eb 55%, #d3dfe9);
  color: #222;
}
.start {
  width: 45px;
  display: flex;
  justify-content: center;
}
.search {
  width: 269px;
  height: 37px;
  display: flex;
  align-items: center;
  padding: 0 2px 0 9px;
  background: #fff;
  border: 1px solid #c6cdd0;
  font-size: 14px;
  letter-spacing: -0.400px;
}
.search span {
  margin-left: 10px;
}
.bird {
  margin-left: auto;
}
.task-view {
  width: 48px;
  display: flex;
  justify-content: center;
}
.app {
  width: 45.900px;
  height: 38px;
  display: flex;
  align-items: center;
  justify-content: center;
}
.app-open {
  background: #edf6f8;
  box-shadow: inset 0 -2px #1474c4;
}
.app-running {
  background: linear-gradient(#1474c4, #1474c4) 50% 100% / 37px 2px no-repeat;
}
.tray {
  margin-left: auto;
  display: flex;
  align-items: center;
  height: 38px;
  padding-right: 10px;
}
.tray > svg {
  fill: none;
  stroke: #222;
  stroke-width: 1.200;
  margin-right: 10px;
}
.tray > .cloud {
  stroke: #7da0e4;
  margin-right: 9px;
}
.weather {
  width: 84px;
  font-size: 13px;
  letter-spacing: -0.100px;
  white-space: nowrap;
}
.lang {
  width: 29px;
  margin-left: -1px;
  font-size: 11px;
}
.clock {
  width: 60px;
  margin-right: 15px;
  display: flex;
  flex-direction: column;
  align-items: center;
  font-size: 11px;
  letter-spacing: -0.450px;
  line-height: 17px;
}
.notify {
  position: relative;
  width: 26px;
  height: 20px;
}
.notify svg {
  margin-left: -2px;
}
.badge {
  position: absolute;
  left: 4px;
  top: 6px;
  width: 18px;
  height: 16px;
  border-radius: 8px;
  border: 1px solid #777;
  background: #d3dde5;
  font-size: 10px;
  font-weight: 600;
  line-height: 14px;
  text-align: center;
}
.watermark {
  position: absolute;
  left: 457px;
  top: 344px;
  font-size: 21.500px;
  line-height: 30px;
  white-space: nowrap;
  color: rgba(255, 255, 255, 0.9);
  text-shadow: 1px 1px 1px #999, 0 0 2px #bbb;
  z-index: 5;
}
.cursor {
  position: absolute;
  left: 513px;
  top: 116px;
  z-index: 6;
}
```
